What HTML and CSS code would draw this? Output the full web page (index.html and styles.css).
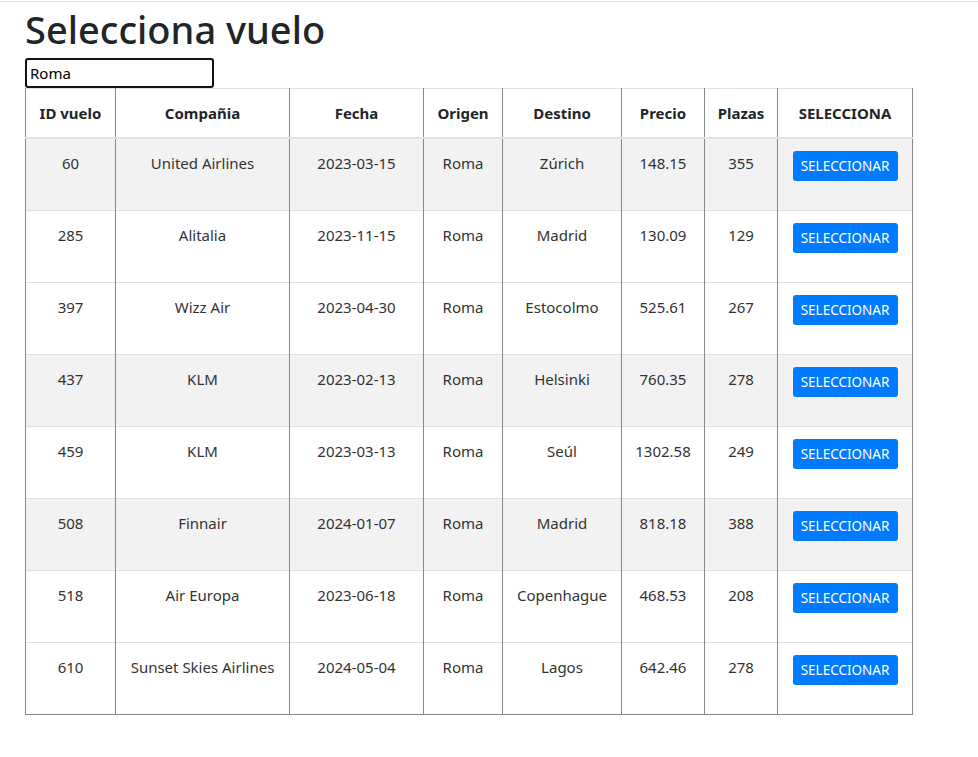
FILE: index.html
```html
<!DOCTYPE html>
<html lang="es">
<head>
<meta charset="utf-8">
<title>Selecciona vuelo</title>
<link rel="stylesheet" href="styles.css">
</head>
<body>
<div class="topline"></div>
<main class="page">
  <h1 class="title">Selecciona vuelo</h1>
  <input class="search" type="text" value="Roma">
  <table class="flights">
    <colgroup>
      <col style="width:90px"><col style="width:174px"><col style="width:134px"><col style="width:79px"><col style="width:119px"><col style="width:83px"><col style="width:73px"><col style="width:135px">
    </colgroup>
    <thead>
      <tr><th>ID vuelo</th><th>Compañia</th><th>Fecha</th><th>Origen</th><th>Destino</th><th>Precio</th><th>Plazas</th><th>SELECCIONA</th></tr>
    </thead>
    <tbody>
      <tr class="shade"><td>60</td><td>United Airlines</td><td>2023-03-15</td><td>Roma</td><td>Zúrich</td><td>148.15</td><td>355</td><td><button class="btn">SELECCIONAR</button></td></tr>
      <tr><td>285</td><td>Alitalia</td><td>2023-11-15</td><td>Roma</td><td>Madrid</td><td>130.09</td><td>129</td><td><button class="btn">SELECCIONAR</button></td></tr>
      <tr><td>397</td><td>Wizz Air</td><td>2023-04-30</td><td>Roma</td><td>Estocolmo</td><td>525.61</td><td>267</td><td><button class="btn">SELECCIONAR</button></td></tr>
      <tr class="shade"><td>437</td><td>KLM</td><td>2023-02-13</td><td>Roma</td><td>Helsinki</td><td>760.35</td><td>278</td><td><button class="btn">SELECCIONAR</button></td></tr>
      <tr><td>459</td><td>KLM</td><td>2023-03-13</td><td>Roma</td><td>Seúl</td><td>1302.58</td><td>249</td><td><button class="btn">SELECCIONAR</button></td></tr>
      <tr class="shade"><td>508</td><td>Finnair</td><td>2024-01-07</td><td>Roma</td><td>Madrid</td><td>818.18</td><td>388</td><td><button class="btn">SELECCIONAR</button></td></tr>
      <tr><td>518</td><td>Air Europa</td><td>2023-06-18</td><td>Roma</td><td>Copenhague</td><td>468.53</td><td>208</td><td><button class="btn">SELECCIONAR</button></td></tr>
      <tr><td>610</td><td>Sunset Skies Airlines</td><td>2024-05-04</td><td>Roma</td><td>Lagos</td><td>642.46</td><td>278</td><td><button class="btn">SELECCIONAR</button></td></tr>
    </tbody>
  </table>
</main>
</body>
</html>
```

FILE: styles.css
```css
html, body {
  margin: 0;
  padding: 0;
  background: #fff;
}
body {
  font-family: "Noto Sans", "Open Sans", "Liberation Sans", sans-serif;
  color: #212529;
  font-size: 16px;
}
.topline {
  margin-top: 1px;
  height: 1px;
  background: #e3e3e3;
}
.page {
  padding-left: 25px;
}
.title {
  margin: 0;
  font-size: 38px;
  font-weight: 500;
  line-height: 54px;
  color: #212529;
}
.search {
  display: block;
  box-sizing: border-box;
  width: 189px;
  height: 30px;
  margin: 2px 0 0 0;
  padding: 0 3px;
  border: 2px solid #111;
  border-radius: 3px;
  font-family: inherit;
  font-size: 15px;
  color: #000;
  outline: none;
}
.flights {
  border-collapse: collapse;
  table-layout: fixed;
  width: 888px;
  border-top: 1px solid #dee2e6;
  border-left: 1px solid #888;
  border-right: 1px solid #888;
  border-bottom: 1px solid #888;
  color: #333;
}
.flights th, .flights td {
  border-left: 1px solid #888;
  border-right: 1px solid #888;
  text-align: center;
  vertical-align: top;
  padding: 12px 4px;
  line-height: 24px;
}
.flights th {
  font-weight: 700;
  font-size: 15px;
  color: #212529;
  border-bottom: 2px solid #dee2e6;
  height: 23px;
}
.flights td {
  font-size: 15px;
  height: 47px;
  border-top: 1px solid #dee2e6;
}
.flights tbody tr:last-child td {
  border-bottom: 1px solid #888;
}
.shade td {
  background: #f2f2f2;
}
.btn {
  margin-top: 0;
  background: #007bff;
  color: #fff;
  border: 0;
  border-radius: 3px;
  font-family: inherit;
  font-size: 13.5px;
  width: 105px;
  height: 30px;
  padding: 0;
  cursor: pointer;
}
```
